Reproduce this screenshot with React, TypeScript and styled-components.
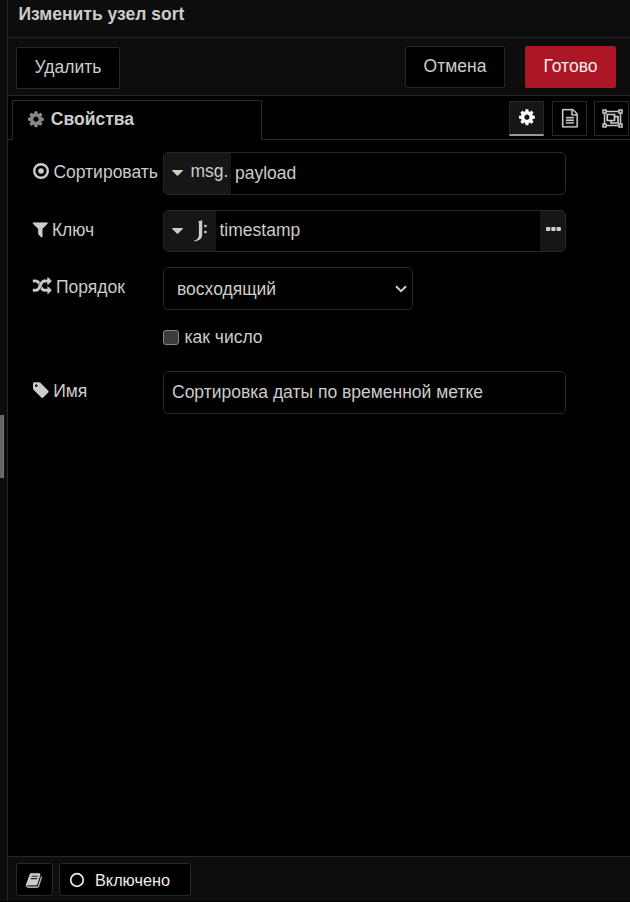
import React from "react";
import styled, { createGlobalStyle } from "styled-components";

const GlobalStyle = createGlobalStyle`
  *, *::before, *::after { box-sizing: border-box; }
  body {
    margin: 0;
    background: #000;
    color: #ccc;
    font: 17.5px/24px "Liberation Sans", Arial, sans-serif;
    overflow: hidden;
  }
  button, input { font: inherit; color: inherit; }
`;

const line = "#282828";

const Page = styled.div`
  display: flex;
  height: 902px;
  width: 630px;
  padding-bottom: 1px;
  overflow: hidden;
`;
const Gutter = styled.div`
  flex: none;
  width: 8px;
  background: #0d0d0d;
  border-right: 1px solid ${line};
  display: flex;
  align-items: flex-start;
`;
const Grip = styled.div`
  width: 4px;
  height: 63px;
  margin-top: 415px;
  background: #666;
  border-right: 1px solid #777;
`;
const Tray = styled.main`
  width: 622px;
  display: flex;
  flex-direction: column;
`;
const Title = styled.header`
  height: 38px;
  padding: 2px 0 0 10.5px;
  font-weight: 700;
  background: #0d0d0d;
  border-bottom: 1px solid ${line};
`;
const Toolbar = styled.div`
  height: 58px;
  padding: 8px 14px 0 8px;
  display: flex;
  align-items: flex-start;
  background: #0d0d0d;
  border-bottom: 1px solid ${line};
`;
const Button = styled.button<{ $width: number; $primary?: boolean; $push?: boolean }>`
  width: ${(p) => p.$width}px;
  height: 42px;
  padding: 0 0 3px;
  margin-left: ${(p) => (p.$primary ? "20px" : p.$push ? "auto" : "0")};
  margin-top: ${(p) => (p.$primary || p.$push ? "0" : "1px")};
  border: 1px solid ${(p) => (p.$primary ? "#ad1625" : line)};
  border-radius: 2px;
  background: ${(p) => (p.$primary ? "#ad1625" : "#000")};
  color: ${(p) => (p.$primary ? "#eee" : "#ccc")};
`;
const TabBar = styled.div`
  height: 44px;
  padding: 4px 0 0 4px;
  display: flex;
  align-items: flex-start;
  box-shadow: inset 0 -1px ${line};
`;
const Tab = styled.div`
  width: 250px;
  height: 40px;
  padding: 0 0 3px 15px;
  display: flex;
  align-items: center;
  gap: 7px;
  font-weight: 700;
  background: #000;
  border: 1px solid ${line};
  border-bottom: 0;
`;
const TabButtons = styled.div`
  margin: 1px 1px 0 auto;
  display: flex;
  gap: 7.5px;
`;
const TabButton = styled.button<{ $active?: boolean }>`
  width: 35px;
  height: 35px;
  padding: 0 0 1px 1px;
  display: flex;
  align-items: center;
  justify-content: center;
  color: ${(p) => (p.$active ? "#fff" : "#ccc")};
  background: ${(p) => (p.$active ? "#161616" : "#000")};
  border: 1px solid ${line};
  border-bottom: ${(p) => (p.$active ? "2px solid #999" : `1px solid ${line}`)};
`;
const Form = styled.form`
  flex: 1;
  padding: 12px 0 0 25px;
`;
const Row = styled.div<{ $gap: number }>`
  display: flex;
  margin-bottom: ${(p) => p.$gap}px;
`;
const Label = styled.label`
  width: 130px;
  height: 40px;
  display: flex;
  align-items: center;
  gap: 4.4px;
  white-space: nowrap;
  > svg { margin-bottom: 1.4px; }
`;
const Field = styled.div<{ $height?: number; $width?: number }>`
  width: ${(p) => p.$width ?? 403}px;
  height: ${(p) => p.$height ?? 43}px;
  display: flex;
  align-items: stretch;
  border: 1px solid ${line};
  border-radius: 5px;
  overflow: hidden;
`;
const TypeButton = styled.div<{ $width: number }>`
  width: ${(p) => p.$width}px;
  flex: none;
  padding: 0 0 1px 7.5px;
  display: flex;
  align-items: center;
  background: #161616;
`;
const TypeLabel = styled.span`
  margin-left: 8px;
  padding-bottom: 4px;
`;
const TypeIcon = styled.span`
  margin-left: 11px;
`;
const TextInput = styled.input<{ $pad: number }>`
  flex: 1;
  min-width: 0;
  padding: 0 0 2px ${(p) => p.$pad}px;
  border: 0;
  outline: 0;
  background: transparent;
`;
const Expand = styled.div`
  width: 25px;
  display: flex;
  align-items: center;
  justify-content: center;
  padding: 0 0 4px 2px;
  background: #161616;
`;
const SelectValue = styled.span`
  flex: 1;
  align-self: center;
  padding-left: 13px;
`;
const Chevron = styled.svg`
  align-self: center;
  margin-right: 5px;
`;
const CheckRow = styled.label`
  height: 24px;
  margin: 0 0 22px 130px;
  display: flex;
  align-items: center;
  gap: 5.5px;
`;
const Checkbox = styled.input`
  appearance: none;
  width: 16px;
  height: 15px;
  margin: 1px 0 0;
  background: #3b3b3b;
  border: 1px solid #858585;
  border-radius: 3px;
`;
const Footer = styled.footer`
  height: 45px;
  padding: 6px 8px;
  display: flex;
  gap: 6px;
  background: #0d0d0d;
  border-top: 1px solid ${line};
`;
const FooterButton = styled.button<{ $width: number }>`
  width: ${(p) => p.$width}px;
  height: 33px;
  padding: 1px 10px 0 9px;
  display: flex;
  align-items: center;
  gap: 10px;
  font-size: 16.25px;
  color: #eee;
  background: #000;
  border: 1px solid ${line};
  border-radius: 3px;
`;
const Glyph = styled.svg`
  flex: none;
  display: block;
  fill: currentColor;
`;

const paths = {
  cog: "M1024 896q0-106-75-181t-181-75-181 75-75 181 75 181 181 75 181-75 75-181zm512-109v222q0 12-8 23t-20 13l-185 28q-19 54-39 91 35 50 107 138 10 12 10 25t-9 23q-27 37-99 108t-94 71q-12 0-26-9l-138-108q-44 23-91 38-16 136-29 186-7 28-36 28h-222q-14 0-24.5-8.5t-11.5-21.5l-28-184q-49-16-90-37l-141 107q-10 9-25 9-14 0-25-11-126-114-165-168-7-10-7-23 0-12 8-23 15-21 51-66.5t54-70.5q-27-50-41-99l-183-27q-13-2-21-12.5t-8-23.5v-222q0-12 8-23t19-13l186-28q14-46 39-92-40-57-107-138-10-12-10-24 0-10 9-23 26-36 98.5-107.5t94.500-71.5q13 0 26 10l138 107q44-23 91-38 16-136 29-186 7-28 36-28h222q14 0 24.500 8.500t11.500 21.500l28 184q49 16 90 37l142-107q9-9 24-9 13 0 25 10 129 119 165 170 7 8 7 22 0 12-8 23-15 21-51 66.500t-54 70.500q26 50 41 98l183 28q13 2 21 12.500t8 23.500z",
  file: "M1468 380q28 28 48 76t20 88v1152q0 40-28 68t-68 28h-1344q-40 0-68-28t-28-68v-1600q0-40 28-68t68-28h896q40 0 88 20t76 48zm-444-244v376h376q-10-29-22-41l-313-313q-12-12-41-22zm384 1528v-1024h-416q-40 0-68-28t-28-68v-416h-768v1536h1280zm-1024-864q0-14 9-23t23-9h704q14 0 23 9t9 23v64q0 14-9 23t-23 9h-704q-14 0-23-9t-9-23v-64zm736 224q14 0 23 9t9 23v64q0 14-9 23t-23 9h-704q-14 0-23-9t-9-23v-64q0-14 9-23t23-9h704zm0 256q14 0 23 9t9 23v64q0 14-9 23t-23 9h-704q-14 0-23-9t-9-23v-64q0-14 9-23t23-9h704z",
  filter: "M1403 295q17 41-14 70l-493 493v742q0 42-39 59-13 5-25 5-27 0-45-19l-256-256q-19-19-19-45v-486l-493-493q-31-29-14-70 17-39 59-39h1280q42 0 59 39z",
  random: "M666 481q-60 92-137 273-22-45-37-72.5t-40.5-63.5-51-56.5-63-35-81.5-14.5h-224q-14 0-23-9t-9-23v-192q0-14 9-23t23-9h224q250 0 410 225zm1126 799q0 14-9 23l-320 320q-9 9-23 9-13 0-22.5-9.5t-9.500-22.5v-192q-32 0-85 .5t-81 1-73-1-71-5-64-10.5-63-18.5-58-28.5-59-40-55-53.5-56-69.5q59-93 136-273 22 45 37 72.500t40.500 63.500 51 56.500 63 35 81.500 14.500h256v-192q0-14 9-23t23-9q12 0 24 10l319 319q9 9 9 23zm0-896q0 14-9 23l-320 320q-9 9-23 9-13 0-22.500-9.500t-9.500-22.500v-192h-256q-48 0-87 15t-69 45-51 61.500-45 77.500q-32 62-78 171-29 66-49.500 111t-54 105-64 100-74 83-90 68.500-106.500 42-128 16.500h-224q-14 0-23-9t-9-23v-192q0-14 9-23t23-9h224q48 0 87-15t69-45 51-61.500 45-77.500q32-62 78-171 29-66 49.500-111t54-105 64-100 74-83 90-68.500 106.500-42 128-16.500h256v-192q0-14 9-23t23-9q12 0 24 10l319 319q9 9 9 23z",
  tag: "M448 448q0-53-37.5-90.5t-90.500-37.500-90.500 37.500-37.500 90.500 37.500 90.500 90.500 37.500 90.500-37.500 37.500-90.500zm1067 576q0 53-37 90l-491 492q-39 37-91 37-53 0-90-37l-715-716q-38-37-64.500-101t-26.500-117v-416q0-52 38-90t90-38h416q53 0 117 26.500t102 64.500l715 714q37 39 37 91z",
  book: "M1639 478q40 57 18 129l-275 906q-19 64-76.500 107.500t-122.500 43.500h-923q-77 0-148.500-53.500t-99.500-131.500q-24-67-2-127 0-4 3-27t4-37q1-8-3-21.500t-3-19.500q2-11 8-21t16.500-23.500 16.500-23.500q23-38 45-91.500t30-91.500q3-10 .5-30t-.5-28q3-11 17-28t17-23q21-36 42-92t25-90q1-9-2.500-32t.5-28q4-13 22-30.500t22-22.500q19-26 42.500-84.500t27.500-96.500q1-8-3-25.500t-2-26.500q2-8 9-18t18-23 17-21q8-12 16.500-30.500t15-35 16-36 19.500-32 26.500-23.500 36-11.500 47.500 5.500l-1 3q38-9 51-9h761q74 0 114 56t18 130l-274 906q-36 119-71.500 153.500t-128.500 34.500h-869q-27 0-38 15-11 16-1 43 24 70 144 70h923q29 0 56-15.500t35-41.500l300-987q7-22 5-57 38 15 59 43zm-1064 2q-4 13 2 22.500t20 9.500h608q13 0 25.500-9.500t16.500-22.500l21-64q4-13-2-22.500t-20-9.500h-608q-13 0-25.500 9.500t-16.500 22.500zm-83 256q-4 13 2 22.500t20 9.500h608q13 0 25.500-9.500t16.500-22.500l21-64q4-13-2-22.500t-20-9.500h-608q-13 0-25.500 9.500t-16.500 22.500z",
};

const widths: Record<keyof typeof paths, number> = {
  cog: 1536,
  file: 1536,
  filter: 1408,
  random: 1792,
  tag: 1536,
  book: 1664,
};

function Icon({
  name,
  size = 18.5,
  color,
  weight = 0,
}: {
  name: keyof typeof paths;
  size?: number;
  color?: string;
  weight?: number;
}) {
  const w = widths[name];
  return (
    <Glyph width={(w / 1792) * size} height={size} viewBox={`0 0 ${w} 1792`} color={color} overflow="visible">
      <path d={paths[name]} stroke="currentColor" strokeWidth={weight} />
    </Glyph>
  );
}

function DotCircle() {
  return (
    <Glyph width="16" height="16" viewBox="0 0 16 16">
      <circle cx="8" cy="8" r="6.8" fill="none" stroke="currentColor" strokeWidth="2.4" />
      <circle cx="8" cy="8" r="2.8" />
    </Glyph>
  );
}

function GroupIcon() {
  return (
    <Glyph width="21" height="19" viewBox="0 0 21 19" fill="none" stroke="currentColor">
      <path d="M2.5 2.5h16v14h-16z" fill="none" strokeWidth="1.5" />
      <path d="M5.200 5.500h7.300v6h-7.300zM12.500 7.700h3.500v6.300h-7v-2.500" fill="none" strokeWidth="1.7" />
      <path d="M1 1h3v3h-3zM17 1h3v3h-3zM1 15h3v3h-3zM17 15h3v3h-3z" fill="#000" strokeWidth="1.500" />
    </Glyph>
  );
}

function Caret() {
  return (
    <Glyph width="11" height="6" viewBox="0 0 11 6">
      <path d="M.6 0h9.800q.9.200.3.900L6.100 5.600q-.6.500-1.200 0L.300.900Q-.300.200.600 0z" />
    </Glyph>
  );
}

function JsonataIcon() {
  return (
    <Glyph width="14" height="22" viewBox="0 0 14 22">
      <path d="M4.500 1.200 8.200.300v14.700q0 5-7.700 6.500l-.3-.9q4.700-1.600 4.700-5.600V2.200L4 2z" />
      <circle cx="11.400" cy="6" r="1.350" />
      <circle cx="11.400" cy="12" r="1.350" />
    </Glyph>
  );
}

export default function App() {
  return (
    <>
      <GlobalStyle />
      <Page>
        <Gutter>
          <Grip />
        </Gutter>
        <Tray>
          <Title>Изменить узел sort</Title>
          <Toolbar>
            <Button $width={104}>Удалить</Button>
            <Button $width={100} $push>Отмена</Button>
            <Button $width={91} $primary>Готово</Button>
          </Toolbar>
          <TabBar>
            <Tab>
              <Icon name="cog" color="#888" />
              Свойства
            </Tab>
            <TabButtons>
              <TabButton $active>
                <Icon name="cog" />
              </TabButton>
              <TabButton>
                <Icon name="file" weight={25} />
              </TabButton>
              <TabButton>
                <GroupIcon />
              </TabButton>
            </TabButtons>
          </TabBar>
          <Form>
            <Row $gap={15}>
              <Label>
                <DotCircle />
                Сортировать
              </Label>
              <Field>
                <TypeButton $width={67}>
                  <Caret />
                  <TypeLabel>msg.</TypeLabel>
                </TypeButton>
                <TextInput $pad={4} defaultValue="payload" />
              </Field>
            </Row>
            <Row $gap={15}>
              <Label>
                <Icon name="filter" weight={50} />
                Ключ
              </Label>
              <Field $height={42}>
                <TypeButton $width={52}>
                  <Caret />
                  <TypeIcon>
                    <JsonataIcon />
                  </TypeIcon>
                </TypeButton>
                <TextInput $pad={3.5} defaultValue="timestamp" />
                <Expand>
                  <Glyph width="15" height="4" viewBox="0 0 15 4">
                    <rect width="4.300" height="4" rx=".8" />
                    <rect x="5.300" width="4.300" height="4" rx=".8" />
                    <rect x="10.600" width="4.300" height="4" rx=".8" />
                  </Glyph>
                </Expand>
              </Field>
            </Row>
            <Row $gap={15}>
              <Label>
                <Icon name="random" weight={35} />
                Порядок
              </Label>
              <Field $width={250}>
                <SelectValue>восходящий</SelectValue>
                <Chevron width="12" height="8" viewBox="0 0 12 8" fill="none" stroke="#ccc" strokeWidth="2">
                  <path d="M1 1.200 6 6.200 11 1.200" />
                </Chevron>
              </Field>
            </Row>
            <CheckRow>
              <Checkbox type="checkbox" />
              как число
            </CheckRow>
            <Row $gap={0}>
              <Label>
                <Icon name="tag" />
                Имя
              </Label>
              <Field>
                <TextInput $pad={8} defaultValue="Сортировка даты по временной метке" />
              </Field>
            </Row>
          </Form>
          <Footer>
            <FooterButton $width={37} aria-label="Справка">
              <Icon name="book" size={17} color="#ccc" weight={20} />
            </FooterButton>
            <FooterButton $width={132}>
              <Glyph width="16" height="16" viewBox="0 0 16 16">
                <circle cx="8" cy="8" r="6.300" fill="none" stroke="currentColor" strokeWidth="1.700" />
              </Glyph>
              Включено
            </FooterButton>
          </Footer>
        </Tray>
      </Page>
    </>
  );
}
